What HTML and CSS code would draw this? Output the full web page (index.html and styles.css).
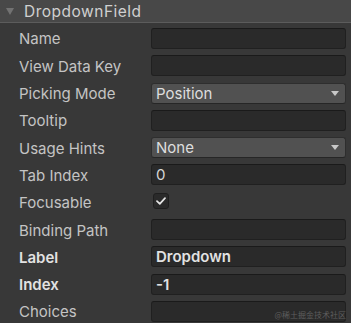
FILE: index.html
```html
<!DOCTYPE html>
<html>
<head>
<meta charset="utf-8">
<link rel="stylesheet" href="styles.css">
</head>
<body>
<div class="panel">
  <div class="header">
    <span class="fold"></span>
    <span class="title">DropdownField</span>
  </div>
  <div class="rows">
    <div class="row"><span class="label">Name</span><div class="field input"></div></div>
    <div class="row"><span class="label">View Data Key</span><div class="field input"></div></div>
    <div class="row"><span class="label">Picking Mode</span><div class="field dropdown"><span class="value">Position</span><span class="arrow"></span></div></div>
    <div class="row"><span class="label">Tooltip</span><div class="field input"></div></div>
    <div class="row"><span class="label">Usage Hints</span><div class="field dropdown"><span class="value">None</span><span class="arrow"></span></div></div>
    <div class="row"><span class="label">Tab Index</span><div class="field input"><span class="value">0</span></div></div>
    <div class="row"><span class="label">Focusable</span>
      <div class="checkbox"><svg width="10" height="8" viewBox="0 0 10 8"><path d="M1 4.2 L3.8 6.8 L9 1.2" fill="none" stroke="#e6e6e6" stroke-width="1.7" stroke-linecap="round" stroke-linejoin="round"/></svg></div>
    </div>
    <div class="row"><span class="label">Binding Path</span><div class="field input"></div></div>
    <div class="row"><span class="label bold">Label</span><div class="field input"><span class="value bold">Dropdown</span></div></div>
    <div class="row"><span class="label bold">Index</span><div class="field input"><span class="value bold">-1</span></div></div>
    <div class="row"><span class="label">Choices</span><div class="field input"></div></div>
  </div>
  <div class="watermark">@稀土掘金技术社区</div>
</div>
</body>
</html>
```

FILE: styles.css
```css
html, body {
  margin: 0;
  padding: 0;
  background: #383838;
}
body {
  width: 351px;
  height: 323px;
  overflow: hidden;
  font-family: Inter, "Noto Sans", sans-serif;
}
.panel {
  position: relative;
  width: 351px;
  height: 323px;
  background: #383838;
}
.header {
  height: 22px;
  background: #484848;
  border-bottom: 1px solid #5c5c5c;
  display: flex;
  align-items: center;
}
.fold {
  width: 0;
  height: 0;
  margin-left: 6px;
  margin-right: 10px;
  margin-top: 1px;
  border-left: 4px solid transparent;
  border-right: 4px solid transparent;
  border-top: 7px solid #727272;
}
.title {
  color: #d0d0d0;
  font-size: 15.5px;
  letter-spacing: 0.5px;
}
.rows {
  padding-top: 1.8px;
}
.row {
  height: 27.3px;
  display: flex;
  align-items: center;
}
.label {
  width: 132px;
  padding-left: 19px;
  padding-top: 1px;
  flex: none;
  color: #c4c4c4;
  font-size: 15px;
  white-space: nowrap;
}
.bold {
  font-weight: 600;
  color: #e2e2e2;
}
.field {
  flex: 1;
  margin-right: 5px;
  height: 21px;
  box-sizing: border-box;
  border-radius: 3px;
  display: flex;
  align-items: center;
  padding-left: 4px;
  font-size: 15px;
  color: #d6d6d6;
}
.input {
  background: #2a2a2a;
  border: 1px solid #202020;
  border-top-color: #1a1a1a;
}
.dropdown {
  background: #515151;
  border: 1px solid #2e2e2e;
  border-bottom-color: #262626;
  justify-content: space-between;
  padding-right: 6px;
}
.dropdown .value {
  color: #dedede;
}
.arrow {
  width: 0;
  height: 0;
  border-left: 4.5px solid transparent;
  border-right: 4.5px solid transparent;
  border-top: 5px solid #c8c8c8;
}
.checkbox {
  width: 16px;
  height: 16px;
  margin-left: 2px;
  margin-top: -2px;
  box-sizing: border-box;
  background: #2a2a2a;
  border: 1px solid #1f1f1f;
  border-radius: 3px;
  display: flex;
  align-items: center;
  justify-content: center;
}
.watermark {
  position: absolute;
  right: 5px;
  bottom: 3px;
  font-family: "Noto Sans CJK SC", sans-serif;
  font-size: 8px;
  color: #5e5e5e;
}
```
